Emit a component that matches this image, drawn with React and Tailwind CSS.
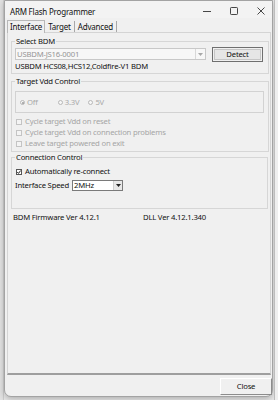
import React from "react";

const Check = ({ checked, disabled, label }) => (
  <div className="flex items-center h-[11px]">
    <span
      className={`w-[6px] h-[6px] border flex items-center justify-center ${
        disabled ? "border-[#c4c4c4] bg-[#f4f4f4]" : "border-[#555] bg-white"
      }`}
    >
      {checked && (
        <svg width="4" height="4" viewBox="0 0 4 4">
          <path d="M0.3 2 L1.5 3.4 L3.7 0.5" stroke="#222" strokeWidth="1" fill="none" />
        </svg>
      )}
    </span>
    <span className={`ml-[3px] ${disabled ? "text-[#a5a5a5]" : "text-[#111]"}`}>{label}</span>
  </div>
);

const Radio = ({ on, label }) => (
  <div className="flex items-center">
    <span className="w-[5px] h-[5px] rounded-full border border-[#b8b8b8] bg-[#f6f6f6] flex items-center justify-center">
      {on && <span className="w-[2px] h-[2px] rounded-full bg-[#9a9a9a]" />}
    </span>
    <span className="ml-[2px] text-[#a8a8a8]">{label}</span>
  </div>
);

const Group = ({ title, className, children }) => (
  <fieldset className={`border border-[#d6d6d6] ${className}`}>
    <legend className="ml-[3px] px-[1px] leading-[10px] text-[#111]">{title}</legend>
    {children}
  </fieldset>
);

const App = () => {
  return (
    <div className="w-[278px] h-[400px] bg-[#e9e9e9] flex overflow-hidden font-['Noto_Sans',sans-serif] text-[7.7px] tracking-[-0.2px] leading-[11px] text-[#111]">
      <div className="w-[4px] h-full bg-[#e2e2e2] border-r border-[#cfcfcf]" />
      <div className="w-[269px] h-[397px] shrink-0 bg-[#f0f0f0] border border-[#a3a3a3] rounded-b-[7px] shadow-[0_2px_6px_rgba(0,0,0,0.25)] flex flex-col">
        {/* title bar */}
        <div className="h-[17px] flex items-center pl-[5px] bg-[#f3f3f3] text-[8px]">
          <span className="mt-[3px]">ARM Flash Programmer</span>
          <div className="flex-1" />
          <svg width="10" height="10" viewBox="0 0 10 10" className="mt-[2px]">
            <path d="M1 5.5 H9" stroke="#333" strokeWidth="0.9" />
          </svg>
          <svg width="10" height="10" viewBox="0 0 10 10" className="ml-[17px] mt-[2px]">
            <rect x="1.5" y="1.5" width="7" height="7" rx="0.8" stroke="#333" strokeWidth="0.9" fill="none" />
          </svg>
          <svg width="10" height="10" viewBox="0 0 10 10" className="ml-[17px] mr-[6px] mt-[2px]">
            <path d="M1.5 1.5 L8.5 8.5 M8.5 1.5 L1.5 8.5" stroke="#333" strokeWidth="0.9" />
          </svg>
        </div>

        {/* tabs */}
        <div className="h-[14px] flex items-end pl-[2px] relative z-10 text-[8px]">
          <div className="h-[13px] px-[2px] flex items-center bg-[#f0f0f0] border-t border-l border-r border-[#b8b8b8] mb-[-1px] pb-[1px]">
            Interface
          </div>
          <div className="h-[11px] px-[3px] flex items-center border-r border-[#a8a8a8]">Target</div>
          <div className="h-[11px] px-[3px] flex items-center border-r border-[#a8a8a8]">Advanced</div>
        </div>

        {/* panel */}
        <div className="ml-[2px] w-[264px] h-[343px] border border-[#d4d4d4] border-b-2 border-b-[#9e9e9e] flex flex-col pl-[3px]">
          <Group title="Select BDM" className="mt-[3px] w-[258px] pb-[1px]">
            <div className="flex items-center mt-[1px] h-[14px]">
              <div className="ml-[3px] w-[191px] h-[12px] border border-[#c8c8c8] bg-[#f7f7f7] flex items-center">
                <span className="pl-[1px] text-[#959595]">USBDM-JS16-0001</span>
                <div className="flex-1" />
                <div className="w-[10px] h-[10px] flex items-center justify-center border-l border-[#d8d8d8]">
                  <svg width="5" height="3" viewBox="0 0 5 3">
                    <path d="M0 0 H5 L2.5 3 Z" fill="#a8a8a8" />
                  </svg>
                </div>
              </div>
              <div className="ml-[6px] w-[51px] h-[15px] border border-[#6f6f6f] p-[1px]">
                <div className="w-full h-full border border-[#c6c6c6] bg-[#e6e6e6] flex items-center justify-center">
                  Detect
                </div>
              </div>
            </div>
            <div className="ml-[3px] h-[11px]">USBDM HCS08,HCS12,Coldfire-V1 BDM</div>
          </Group>

          <Group title="Target Vdd Control" className="mt-[2px] w-[258px] pb-[2px]">
            <div className="ml-[3px] mt-[5px] w-[249px] h-[22px] border border-[#d2d2d2] flex items-center pl-[4px] pt-[1px]">
              <Radio on label="Off" />
              <div className="ml-[20px]">
                <Radio label="3.3V" />
              </div>
              <div className="ml-[9px]">
                <Radio label="5V" />
              </div>
            </div>
            <div className="ml-[4px] mt-[3px] flex flex-col">
              <Check disabled label="Cycle target Vdd on reset" />
              <Check disabled label="Cycle target Vdd on connection problems" />
              <Check disabled label="Leave target powered on exit" />
            </div>
          </Group>

          <Group title="Connection Control" className="w-[257px] pb-[17px]">
            <div className="ml-[4px] mt-[4px]">
              <Check checked label="Automatically re-connect" />
            </div>
            <div className="ml-[3px] mt-[3px] flex items-center h-[11px]">
              <span className="w-[57px]">Interface Speed</span>
              <div className="w-[51px] h-[11px] border border-[#7a7a7a] bg-white flex items-center">
                <span className="pl-[1px]">2MHz</span>
                <div className="flex-1" />
                <div className="w-[9px] h-[9px] bg-[#e8e8e8] border-l border-[#cfcfcf] flex items-center justify-center">
                  <svg width="5" height="3" viewBox="0 0 5 3">
                    <path d="M0 0 H5 L2.5 3 Z" fill="#222" />
                  </svg>
                </div>
              </div>
            </div>
          </Group>

          <div className="mt-[3px] flex h-[11px]">
            <span className="ml-[2px] w-[130px]">BDM Firmware Ver 4.12.1</span>
            <span>DLL Ver 4.12.1.340</span>
          </div>
        </div>

        {/* footer */}
        <div className="flex-1 flex items-end justify-end">
          <div className="w-[52px] h-[17px] mb-[1px] border border-[#ffffff] border-r-[#8c8c8c] border-b-[#8c8c8c] bg-[#f0f0f0] flex items-center justify-center">
            Close
          </div>
        </div>
      </div>
      <div className="flex-1 h-full bg-[#efefef] border-l border-[#bdbdbd] ml-[1px]" />
    </div>
  );
};

export default App;
